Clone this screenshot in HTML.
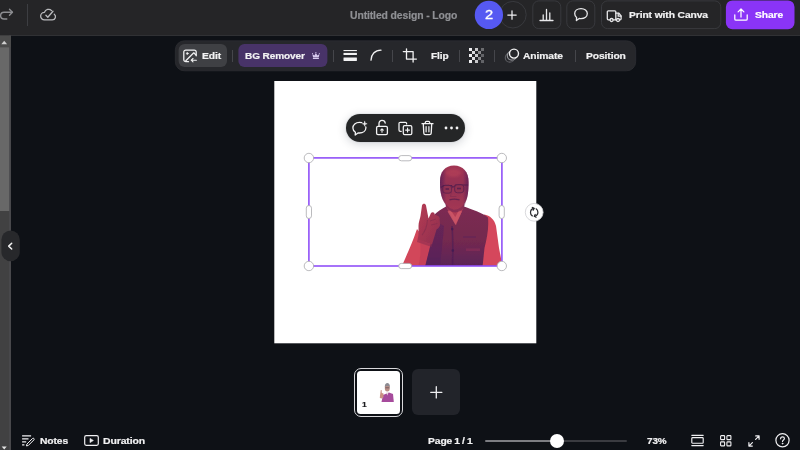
<!DOCTYPE html>
<html lang="en">
<head>
<meta charset="utf-8">
<title>Untitled design - Logo</title>
<style>
*{box-sizing:border-box;margin:0;padding:0}
html,body{width:800px;height:450px;overflow:hidden;background:#0e1116;font-family:"Liberation Sans",sans-serif;color:#fff}
.abs{position:absolute}
#top{position:absolute;left:0;top:0;width:800px;height:36px;background:#252527;border-bottom:1px solid #303134}
.t{position:absolute;will-change:transform;transform:scaleX(1.075);transform-origin:0 50%;-webkit-text-stroke:.2px currentColor;white-space:nowrap;font-weight:bold;font-size:9.3px;line-height:12px;color:#f2f2f3;letter-spacing:-0.1px}
.btn{position:absolute;border:1px solid #3a3b3f;border-radius:6px;background:#232325}
svg{position:absolute;overflow:visible}
#tb{position:absolute;left:175px;top:40px;width:461px;height:31px;background:#25262a;border-radius:9px;box-shadow:0 0 0 1px #2d2e33}
.sep{position:absolute;width:1px;height:12px;top:50px;background:#45464b}
</style>
</head>
<body>
<!-- top bar -->
<div id="top"></div>
<svg style="left:0;top:0" width="16" height="30" viewBox="0 0 16 30" fill="none" stroke="#8c8d91" stroke-width="1.400" stroke-linecap="round" stroke-linejoin="round"><path d="M9.500 9.200 12.400 12.200 9.500 15.200"/><path d="M12.400 12.200H4A3.400 3.400 0 0 0 4 19H6.800"/></svg>
<div class="abs" style="left:27px;top:4px;width:1px;height:22px;background:#3d3e42"></div>
<svg style="left:39.100px;top:6.100px" width="18" height="17" viewBox="0 0 18 17" fill="none" stroke="#b9babd" stroke-width="1.300" stroke-linecap="round" stroke-linejoin="round"><path d="M12.600 4.600A4.300 4.300 0 0 0 5.500 6.300 3.800 3.800 0 0 0 5.400 13.900H13.300A3.200 3.200 0 0 0 15.300 8.200"/><path d="M6.900 9.300 8.800 11.200 14 5.200"/></svg>
<div class="t" style="left:349.500px;top:10px;color:#8f9094;font-size:10.38px;transform:none">Untitled design - Logo</div>
<svg style="left:0;top:0" width="800" height="36" viewBox="0 0 800 36"><g fill="none" stroke="#3b3c41" stroke-width=".9"><rect x="532.800" y=".9" width="28" height="27.700" rx="6"/><rect x="566.800" y=".9" width="28" height="27.700" rx="6"/><rect x="601.500" y=".9" width="119.300" height="27.700" rx="6"/></g><circle cx="512.900" cy="14.700" r="13.300" fill="none" stroke="#3b3c41" stroke-width=".9"/><circle cx="488.900" cy="14.900" r="14.150" fill="#5659f2"/></svg>
<div class="t" style="left:485px;top:6.600px;font-size:13.6px;line-height:16px;font-weight:normal;color:#fff;-webkit-text-stroke:.35px #fff">2</div>
<svg style="left:507.200px;top:10px" width="10" height="10" viewBox="0 0 10 10" stroke="#f0f0f2" stroke-width="1.25" stroke-linecap="round"><path d="M5 .8V9.2M.8 5H9.2"/></svg>
<svg style="left:539px;top:8px" width="15" height="14" viewBox="0 0 15 14" stroke="#e8e8ea" stroke-width="1.3" stroke-linecap="round" fill="none"><path d="M1 12.5H14M4.2 12V7M7.5 12V1.5M10.8 12V5"/></svg>
<svg style="left:573px;top:7px" width="16" height="16" viewBox="0 0 16 16" stroke="#e8e8ea" stroke-width="1.3" stroke-linejoin="round" fill="none"><path d="M8 1.6c3.6 0 6.3 2.1 6.3 5s-2.7 5-6.3 5c-.6 0-1.2-.06-1.8-.2L3.4 13.6l.2-3.1C2.4 9.6 1.7 8.2 1.7 6.6c0-2.900 2.700-5 6.300-5z"/></svg>
<svg style="left:606.300px;top:8.600px" width="17" height="14" viewBox="0 0 17 14" stroke="#e8e8ea" stroke-width="1.3" stroke-linejoin="round" stroke-linecap="round" fill="none"><path d="M4 10.800H2.300a1 1 0 0 1-1-1V2.800a1 1 0 0 1 1-1h6.500a1 1 0 0 1 1 1v8H7.200"/><path d="M9.800 4.200h3.100l2.200 2.800v2.800a1 1 0 0 1-1 1h-.5M9.800 10.800h.6"/><path d="M12.200 4.400v2.800h2.800"/><circle cx="5.600" cy="11" r="1.500"/><circle cx="12" cy="11" r="1.500"/></svg>
<div class="t" style="left:629px;top:9px;font-size:9.58px">Print with Canva</div>
<svg style="left:0;top:0" width="800" height="36" viewBox="0 0 800 36"><rect x="725.900" y=".4" width="68.600" height="28.800" rx="6.500" fill="#8a34f7"/></svg>
<svg style="left:733.500px;top:7.200px" width="14" height="15" viewBox="0 0 14 15" stroke="#fff" stroke-width="1.250" stroke-linejoin="round" stroke-linecap="round" fill="none"><path d="M7 10V2.200M4.100 4.900 7 2 9.900 4.900M.8 7.800V11.900A1.300 1.300 0 0 0 2.100 13.200H11.900A1.300 1.300 0 0 0 13.200 11.900V7.800"/></svg>
<div class="t" style="left:755px;top:9px;font-size:9.58px;color:#fff">Share</div>

<!-- left scrollbar -->
<svg style="left:0;top:0" width="12" height="450" viewBox="0 0 12 450"><rect x="0" y="35.600" width="11" height="415" fill="#414142"/><rect x="9" y="35.600" width="2" height="415" fill="#48484b"/><rect x="0" y="35.600" width="11" height="11.700" fill="#4b4b4b"/><rect x="0" y="47.300" width="9.200" height="163.700" fill="#686868"/><path d="M1.300 44.200 4.200 40.700 7.100 44.200z" fill="#cfcfcf"/><path d="M1.700 446.600H6.700L4.200 449.400z" fill="#e4e4e4"/></svg>
<!-- collapse handle -->
<svg style="left:0;top:225px" width="24" height="42" viewBox="0 225 24 42"><rect x="1.400" y="230.500" width="18.400" height="30.800" rx="9.200" fill="#27282b"/><path d="M11.700 243.200 8.700 246.100 11.700 249" fill="none" stroke="#f3f3f3" stroke-width="1.500" stroke-linecap="round" stroke-linejoin="round"/></svg>

<!-- toolbar -->
<svg style="left:0;top:0" width="800" height="450" viewBox="0 0 800 450"><rect x="175.300" y="40.800" width="460.400" height="30" rx="9" fill="#26272b" stroke="#2f3035" stroke-width=".7"/><rect x="178.600" y="44" width="48.400" height="23" rx="6" fill="#3f4044"/><rect x="238.400" y="44" width="89" height="23" rx="6" fill="#483368"/></svg>
<svg style="left:183px;top:48.500px" width="14" height="14" viewBox="0 0 14 14" fill="none" stroke="#f2f2f3" stroke-width="1.250" stroke-linecap="round" stroke-linejoin="round"><path d="M13.200 6.800V3A2 2 0 0 0 11.200 1H2.800A2 2 0 0 0 .8 3V10.700A2 2 0 0 0 2.800 12.700H5.500"/><circle cx="4.300" cy="4.500" r=".9" fill="#f2f2f3" stroke-width=".6"/><path d="M2.800 11.800 10.800 3.800 13 6"/><path d="M13.400 11.200H8.300M10 9.500 8.200 11.200 10 12.900" stroke-width="1.100"/></svg>
<div class="t" style="left:202px;top:50px;font-size:9.58px">Edit</div>
<div class="sep" style="left:232px"></div>
<div class="t" style="left:244.700px;top:50.400px;font-size:9.35px">BG Remover</div>
<svg style="left:311.800px;top:52.200px" width="7.800" height="7" viewBox="0 0 7.800 7" fill="#d6c9ee"><path d="M.9 6.100H6.900V7H.9zM.3 1.900 2.400 3.400 3.900 .9 5.400 3.400 7.500 1.900 6.700 5.500H1.100z"/><circle cx="3.900" cy=".6" r=".6"/><circle cx=".5" cy="1.600" r=".5"/><circle cx="7.300" cy="1.600" r=".5"/></svg>
<div class="sep" style="left:333px"></div>
<svg style="left:343px;top:49px" width="14" height="13" viewBox="0 0 14 13" fill="#f2f2f3"><rect x="0.500" y="1" width="13.400" height="1.100"/><rect x="0.500" y="3.900" width="13.400" height="2.100"/><rect x="0.500" y="8.400" width="13.400" height="3.600" rx=".4"/></svg>
<svg style="left:370px;top:49px" width="12" height="12" viewBox="0 0 12 12" fill="none" stroke="#f2f2f3" stroke-width="1.300" stroke-linecap="round"><path d="M1 11.200C1 5.500 5 1.200 11 1.200"/></svg>
<div class="sep" style="left:392px"></div>
<svg style="left:402px;top:48px" width="16" height="15" viewBox="0 0 16 15" fill="none" stroke="#f2f2f3" stroke-width="1.300" stroke-linecap="round" stroke-linejoin="round"><path d="M1.300 3.600H11.100V14M4.500 .8V11.100H14.400"/></svg>
<div class="t" style="left:430.600px;top:50.300px;font-size:9.39px">Flip</div>
<div class="sep" style="left:459px"></div>
<svg style="left:469px;top:48px" width="15" height="15" viewBox="0 0 15 15"><g fill="#f0f0f2"><rect x="0" y="0" width="3" height="3"/><rect x="6" y="0" width="3" height="3" opacity=".8"/><rect x="12" y="0" width="3" height="3" opacity=".35"/><rect x="3" y="3" width="3" height="3" opacity=".9"/><rect x="9" y="3" width="3" height="3" opacity=".5"/><rect x="0" y="6" width="3" height="3"/><rect x="6" y="6" width="3" height="3" opacity=".8"/><rect x="12" y="6" width="3" height="3" opacity=".3"/><rect x="3" y="9" width="3" height="3" opacity=".9"/><rect x="9" y="9" width="3" height="3" opacity=".5"/><rect x="0" y="12" width="3" height="3"/><rect x="6" y="12" width="3" height="3" opacity=".8"/><rect x="12" y="12" width="3" height="3" opacity=".3"/></g></svg>
<div class="sep" style="left:494px"></div>
<svg style="left:503px;top:47px" width="17" height="17" viewBox="0 0 17 17" fill="none" stroke-width="1.200"><circle cx="6.800" cy="10.700" r="4.500" stroke="#5c5d62"/><circle cx="8.800" cy="8.700" r="4.500" stroke="#8e8f94" fill="#26272b"/><circle cx="11" cy="6.600" r="4.500" stroke="#f2f2f3" stroke-width="1.400" fill="#26272b"/></svg>
<div class="t" style="left:523px;top:50px;font-size:9.58px">Animate</div>
<div class="sep" style="left:575px"></div>
<div class="t" style="left:586px;top:50px;font-size:9.58px">Position</div>

<!-- canvas -->
<svg style="left:0;top:0" width="800" height="450" viewBox="0 0 800 450"><rect x="274.300" y="81" width="262" height="262.300" fill="#fff"/></svg>


<!-- person image -->
<svg style="left:0;top:0" width="800" height="450" viewBox="0 0 800 450">
<defs>
<linearGradient id="gv" x1="0" y1="0" x2="0" y2="1"><stop offset="0" stop-color="#7c2b52"/><stop offset=".55" stop-color="#74294f"/><stop offset="1" stop-color="#5a2458"/></linearGradient>
<linearGradient id="gh" x1="0" y1="0" x2="0" y2="1"><stop offset="0" stop-color="#a23653"/><stop offset=".45" stop-color="#943152"/><stop offset="1" stop-color="#a33753"/></linearGradient>
<linearGradient id="gs" x1="0" y1="0" x2="1" y2="0"><stop offset="0" stop-color="#5b2059" stop-opacity=".85"/><stop offset=".22" stop-color="#5b2059" stop-opacity="0"/><stop offset=".8" stop-color="#5b2059" stop-opacity="0"/><stop offset="1" stop-color="#5b2059" stop-opacity=".8"/></linearGradient>
<linearGradient id="ga" x1="0" y1="0" x2="1" y2="1"><stop offset="0" stop-color="#b63b52"/><stop offset="1" stop-color="#8f2f50"/></linearGradient>
<filter id="bl" x="-5%" y="-5%" width="110%" height="110%"><feGaussianBlur stdDeviation=".55"/></filter>
<filter id="bl2" x="-20%" y="-20%" width="140%" height="140%"><feGaussianBlur stdDeviation="1"/></filter>
<clipPath id="cp"><rect x="309" y="158" width="193" height="108"/></clipPath>
</defs>
<g clip-path="url(#cp)"><g filter="url(#bl)">
<!-- right sleeve -->
<path d="M484 214.500C490 215.500 494.500 219.500 496 226L499 248 501.500 261 502 267H480z" fill="#d5475b"/>
<!-- left sleeve -->
<path d="M417 229C414 238 409 250 405 259L401.500 267H428L432 244 424 238z" fill="#d2465a"/>
<path d="M420 238 431 244 427 267H418C421 258 421 247 420 238z" fill="#b93b55" opacity=".5"/>
<!-- neck & shirt -->
<path d="M446 202H464V214L456 226 446 214z" fill="#b23c55"/>
<!-- vest -->
<path d="M446 206.500C441.500 209 437 212 434 215 436.500 226 433 238 430.500 245L425 267H482.500L484.500 248C487 238 489 228 488 217.500 483 213 471 209 464 206.500L456 225z" fill="url(#gv)"/>
<path d="M452 226C453 238 453 252 452.500 266" stroke="#4b1d55" stroke-width="1.600" fill="none" opacity=".6"/>
<path d="M425 267 430.500 245C433 238 436 230 437 222L444 226C443 240 441 256 440 267z" fill="#4f2060" opacity=".45"/>
<path d="M463 237H476" stroke="#55205a" stroke-width="1.200" opacity=".5"/>
<path d="M466 248.500H480V251H466z" fill="#8a3058" opacity=".6"/>
<circle cx="452.300" cy="229" r="1.200" fill="#3f1a52" opacity=".8"/><circle cx="452.800" cy="250.500" r="1.300" fill="#3f1a52" opacity=".8"/>
<path d="M447.500 211.500 455.500 225 462 211.500 459 210 455.300 217 450.500 210z" fill="#cf5969" opacity=".8"/>
<!-- head -->
<path id="hd" d="M454 165.600C463 165.600 468.500 172 468.500 182 468.500 190 468 197 465.500 202 463 206.500 459.500 209.500 455 209.500 450.500 209.500 447 206.500 444 202 441 197 440 190 440 182 440 172 445 165.600 454 165.600z" fill="url(#gh)"/>
<path d="M454 165.600C463 165.600 468.500 172 468.500 182 468.500 190 468 197 465.500 202 463 206.500 459.500 209.500 455 209.500 450.500 209.500 447 206.500 444 202 441 197 440 190 440 182 440 172 445 165.600 454 165.600z" fill="url(#gs)"/>
<path d="M441 187.500 443.500 185.500H451.500L452.500 187 454.500 186.500 455.500 185H464.500L468 185" stroke="#4e1d4f" stroke-width="1.200" fill="none" opacity=".85"/>
<rect x="442.800" y="185.200" width="8.800" height="8" rx="2.800" fill="#8f3051" stroke="#53204f" stroke-width=".9" opacity=".8"/>
<rect x="454.600" y="184.600" width="9.200" height="8.200" rx="2.800" fill="#8f3051" stroke="#53204f" stroke-width=".9" opacity=".8"/>
<path d="M445.500 189H449M457 188.500H461" stroke="#451a4c" stroke-width="1.300" opacity=".7"/>
<path d="M449.500 199.800C452 199 456.500 199 459.500 199.800" stroke="#5a2050" stroke-width="1.300" fill="none" opacity=".8"/>
<path d="M451.500 192 450.500 196.500H456.500" stroke="#7a2950" stroke-width=".9" fill="none" opacity=".6"/>
<path d="M444.500 202C447.500 207 451.500 209.500 455 209.500 459 209.500 463 206.500 465.500 201.500 465.500 207 461.500 212 455.500 212.500 450 212.500 445.500 208 444.500 202z" fill="#6a2450" opacity=".55"/>
<ellipse cx="453.500" cy="173" rx="7.500" ry="4" fill="#b9425a" opacity=".55" filter="url(#bl2)"/>
<!-- hand -->
<path d="M422 205.500C422.500 203 425.500 203 426 205.500L428.500 218.500 431 213C432.500 211.500 435 212.500 434.500 214.500L438 216C439.500 217 440 218.500 439.500 220L440 223.500C440.500 226 438.500 228.500 436.500 229.500L432 244.500 417.500 239.500C419 235 418.500 230 418.500 226 418.500 222 420 219 420.500 216z" fill="url(#ga)"/>
<path d="M427.500 220C427 226 425.500 231 422 235" stroke="#7e2a4e" stroke-width="1.100" fill="none" opacity=".55"/>
<path d="M430 221 436 219M431 225 437.500 223.500" stroke="#7e2a4e" stroke-width="1" fill="none" opacity=".5"/>
<path d="M417.500 239.500 432 244.500 431.500 247 417 242z" fill="#8a2d4f" opacity=".55"/>
</g></g>
</svg>

<!-- floating pill -->
<div class="abs" style="left:346px;top:114px;width:119px;height:28px;border-radius:14px;background:#252627;box-shadow:0 0 0 1px rgba(64,87,109,.06),0 2px 10px rgba(40,50,70,.22)"></div>

<!-- pill icons -->
<svg style="left:352px;top:120px" width="17" height="17" viewBox="0 0 17 17" fill="none" stroke="#f4f4f5" stroke-width="1.300" stroke-linecap="round" stroke-linejoin="round"><path d="M9.800 2.700C9 2.500 8.200 2.400 7.400 2.400 3.700 2.400 .9 4.900 .9 8c0 1.800 1 3.300 2.500 4.300L3.200 15 6 12.900c.5.100 .9.100 1.400.100 3.700 0 6.500-2.200 6.500-5.200 0-.3 0-.6-.1-.9"/><path d="M12.700 1.300 13.300 3.200 15.200 3.800 13.300 4.400 12.700 6.300 12.100 4.400 10.200 3.800 12.100 3.200z" fill="#f4f4f5" stroke-width=".4"/></svg>
<svg style="left:375px;top:119px" width="14" height="17" viewBox="0 0 14 17" fill="none" stroke="#f4f4f5" stroke-width="1.300" stroke-linecap="round" stroke-linejoin="round"><rect x="1.600" y="7.300" width="10.800" height="8.300" rx="1.400"/><path d="M4 7.200V4.600C4 2.700 5.300 1.400 7 1.400 8.700 1.400 10 2.500 10.200 4"/><path d="M7 13.300V10M5.700 11.200 7 9.800 8.300 11.200" stroke-width="1.100"/></svg>
<svg style="left:397px;top:121px" width="16" height="15" viewBox="0 0 16 15" fill="none" stroke="#f4f4f5" stroke-width="1.250" stroke-linecap="round" stroke-linejoin="round"><rect x="6.300" y="4.600" width="8.500" height="8.900" rx="1.300"/><path d="M4.200 10.400H3.300A1.300 1.300 0 0 1 2 9.100V2.600A1.300 1.300 0 0 1 3.300 1.300H8.300A1.300 1.300 0 0 1 9.600 2.600V2.900"/><path d="M10.550 7.100V11M8.600 9.050H12.500" stroke-width="1.150"/></svg>
<svg style="left:421px;top:120px" width="13" height="16" viewBox="0 0 13 16" fill="none" stroke="#f4f4f5" stroke-width="1.300" stroke-linecap="round" stroke-linejoin="round"><path d="M1 3.700H12M4.300 3.500V2.600A1.300 1.300 0 0 1 5.600 1.300H7.400A1.300 1.300 0 0 1 8.700 2.600V3.500M2.300 3.900 2.800 13.300A1.500 1.500 0 0 0 4.300 14.700H8.700A1.500 1.500 0 0 0 10.200 13.300L10.700 3.900"/><path d="M5.100 6.500V11.800M7.900 6.500V11.800" stroke-width="1.200"/></svg>
<svg style="left:444px;top:126px" width="15" height="4" viewBox="0 0 15 4" fill="#f4f4f5"><circle cx="2" cy="2" r="1.400"/><circle cx="7.500" cy="2" r="1.400"/><circle cx="13" cy="2" r="1.400"/></svg>

<!-- selection -->
<svg style="left:0;top:0" width="800" height="450" viewBox="0 0 800 450"><rect x="308.900" y="157.900" width="193" height="108.100" fill="none" stroke="#9051f8" stroke-width="1.600"/></svg>
<svg style="left:0;top:0" width="800" height="450" viewBox="0 0 800 450" fill="#fff" stroke="#a9a9ad" stroke-width=".8">
<circle cx="308.900" cy="158" r="4.700"/><circle cx="501.800" cy="158" r="4.700"/><circle cx="308.900" cy="266" r="4.700"/><circle cx="501.800" cy="266" r="4.700"/>
<rect x="398.700" y="155.600" width="13" height="5.200" rx="2.600"/><rect x="398.700" y="263.400" width="13" height="5.200" rx="2.600"/>
<rect x="306.300" y="205.500" width="5.200" height="13" rx="2.600"/><rect x="499.100" y="205.500" width="5.200" height="13" rx="2.600"/>
<circle cx="534.200" cy="212.300" r="8.900" stroke="#cfcfd3"/>
<g fill="none" stroke="#2a2b2f" stroke-width="1.250" stroke-linecap="round" stroke-linejoin="round"><path d="M533.900 208.400C531.600 208.900 530.500 210.700 530.500 212.500 530.500 214 531.200 215.200 532.300 215.900"/><path d="M532.300 207.500 534.100 208.400 533.200 210.200"/><path d="M534.500 216.300C536.800 215.800 537.900 214 537.900 212.200 537.900 210.700 537.200 209.500 536.100 208.800"/><path d="M536.100 217.200 534.300 216.300 535.200 214.500"/></g>
</svg>

<!-- bottom -->
<div class="abs" style="left:354px;top:368px;width:49px;height:48.500px;border-radius:7px;border:1.200px solid #d9d9dc;background:#0e1116"></div>
<div class="abs" style="left:357.200px;top:371px;width:42.700px;height:42.600px;border-radius:3.500px;background:#fff"></div>
<div class="t" style="left:362.300px;top:400.300px;font-size:7.9px;color:#1c1c1f;line-height:10px">1</div>
<svg style="left:0;top:0" width="800" height="450" viewBox="0 0 800 450"><g filter="url(#bl)">
<path d="M381.500 401.900 383 395 389 392.500 393 394 393.800 401.900z" fill="#a64c9c"/>
<path d="M380 395.500 380.800 390 381.600 390 381.800 393 383.500 393.500 383.500 397 382 398.500 379.800 398z" fill="#c99083"/>
<ellipse cx="387.300" cy="388" rx="2.500" ry="3.600" fill="#b98f86"/>
<path d="M384.800 387C384.800 384 386 383 387.300 383 388.800 383 389.900 384 389.900 387 389 385.500 385.800 385.500 384.800 387z" fill="#8d8c93"/>
<path d="M385.300 387.800H389.300" stroke="#5b4a55" stroke-width=".7"/>
<path d="M386.200 392.500 387.300 395.500 388.500 392.500z" fill="#e6d7dc"/>
</g></svg>
<div class="abs" style="left:411.500px;top:369px;width:48.500px;height:46.300px;border-radius:6px;background:#22242a"></div>
<svg style="left:430px;top:385.500px" width="12.600" height="12.600" viewBox="0 0 12.600 12.600" stroke="#f0f0f2" stroke-width="1.300" stroke-linecap="round"><path d="M6.300 .7V11.900M.7 6.300H11.900"/></svg>

<svg style="left:22px;top:435px" width="13" height="12" viewBox="0 0 13 12" fill="none" stroke="#f0f0f2" stroke-width="1.200" stroke-linecap="butt" stroke-linejoin="round"><path d="M.1 .9H9.100M.1 3.900H6.500M.1 6.900H4.200M.1 9.900H2.400"/><path d="M4.400 10.900 4.900 9.100 10.500 3.500C10.900 3.100 11.500 3.100 11.900 3.500 12.300 3.900 12.300 4.500 11.900 4.900L6.300 10.500z" stroke-width="1" fill="#0e1116"/></svg>
<div class="t" style="left:39.500px;top:434.500px;font-size:9.58px">Notes</div>
<svg style="left:84px;top:435px" width="15" height="11" viewBox="0 0 15 11" fill="none" stroke="#f0f0f2" stroke-width="1.200" stroke-linejoin="round"><rect x=".7" y=".7" width="13.600" height="9.600" rx="1.500"/><path d="M6 3.400 9.400 5.500 6 7.600z" fill="#f0f0f2" stroke-width=".6"/></svg>
<div class="t" style="left:103.200px;top:434.500px;font-size:9.72px">Duration</div>
<div class="t" style="left:428.300px;top:434.500px;font-size:9.58px;word-spacing:-.6px">Page 1 / 1</div>
<div class="abs" style="left:485px;top:440px;width:72px;height:2px;background:#7c7d82;border-radius:1px"></div>
<div class="abs" style="left:557px;top:440px;width:70px;height:2px;background:#3a3b40;border-radius:1px"></div>
<div class="abs" style="left:550px;top:434px;width:14px;height:14px;border-radius:50%;background:#fff"></div>
<div class="t" style="left:646.500px;top:434.500px;font-size:9.25px">73%</div>
<svg style="left:690.600px;top:434px" width="13" height="13" viewBox="0 0 13 13" fill="none" stroke="#f0f0f2" stroke-width="1.150" stroke-linecap="round"><path d="M.8 1.300H12.200M.8 11.600H12.200"/><rect x=".8" y="3.600" width="11.400" height="5.600" rx=".8"/></svg>
<svg style="left:720px;top:435px" width="12" height="12" viewBox="0 0 12 12" fill="none" stroke="#f0f0f2" stroke-width="1.100"><rect x=".6" y=".6" width="4" height="4" rx=".7"/><rect x="6.900" y=".6" width="4" height="4" rx=".7"/><rect x=".6" y="6.900" width="4" height="4" rx=".7"/><rect x="6.900" y="6.900" width="4" height="4" rx=".7"/></svg>
<svg style="left:748.200px;top:434.800px" width="12" height="12" viewBox="0 0 12 12" fill="none" stroke="#f0f0f2" stroke-width="1.200" stroke-linecap="round" stroke-linejoin="round"><path d="M7.700 .9H11.100V4.300M11.100 .9 7.600 4.400M4.300 11.100H.9V7.700M.9 11.100 4.400 7.600"/></svg>
<svg style="left:775.400px;top:433.200px" width="15" height="15" viewBox="0 0 15 15" fill="none" stroke="#f0f0f2" stroke-width="1.200" stroke-linecap="round" stroke-linejoin="round"><circle cx="7.500" cy="7.300" r="6.600"/><path d="M5.600 5.800C5.600 4.700 6.400 3.900 7.500 3.900 8.600 3.900 9.400 4.600 9.400 5.600 9.400 6.900 7.500 7 7.500 8.500"/><circle cx="7.500" cy="10.600" r=".55" fill="#f0f0f2" stroke-width=".5"/></svg>
</body>
</html>
